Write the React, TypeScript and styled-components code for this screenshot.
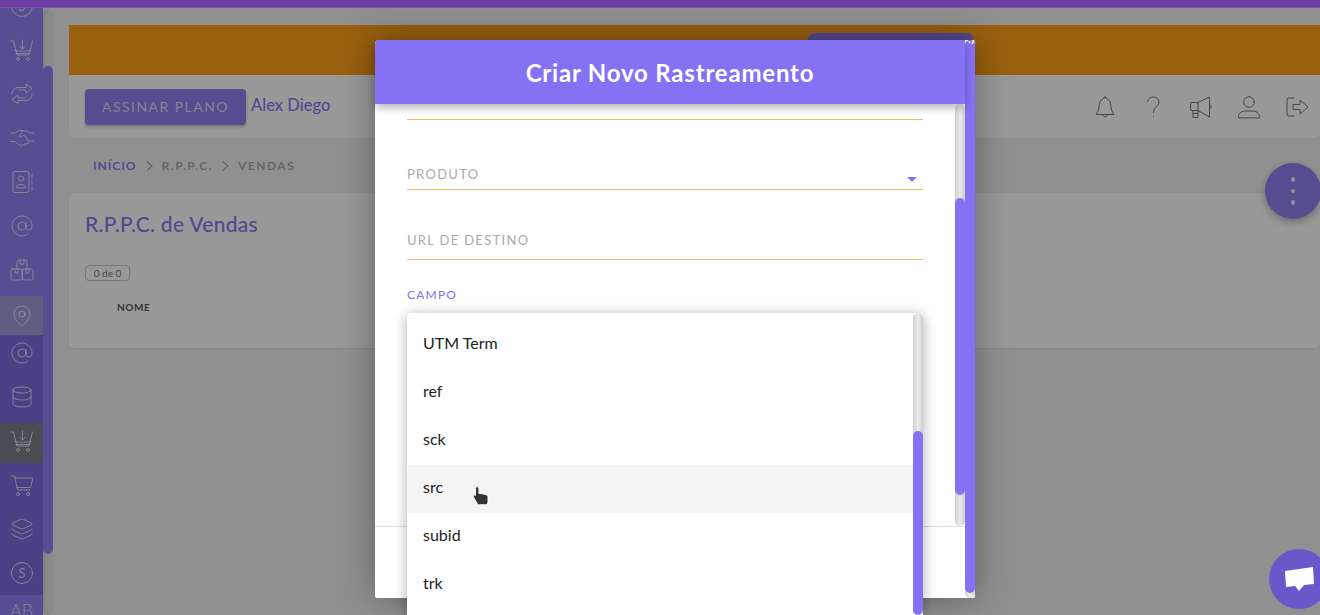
import React from "react";
import styled, { createGlobalStyle } from "styled-components";
import { AtSign, Database, Layers, MapPin } from "lucide-react";

const Font = `"Lato", "Noto Sans", sans-serif`;

const Global = createGlobalStyle`
  html, body { margin: 0; padding: 0; overflow: hidden; background: #f1f1f1; }
  #root { height: 615px; }
  * { box-sizing: border-box; }
`;

const Page = styled.div`
  position: relative; width: 1320px; height: 615px; overflow: hidden;
  display: flex; flex-direction: column; font-family: ${Font}; background: #f1f1f1;
`;
const TopBar = styled.div`
  position: relative; z-index: 3; height: 8px; flex: none; background: #6e40a5;
  border-bottom: 1px solid #7a4fae;
`;
const Shell = styled.div`display: flex; flex: 1; min-height: 0;`;
const Sidebar = styled.nav`
  width: 43px; flex: none; overflow: hidden; display: flex; flex-direction: column;
`;
const NavGroup = styled.div<{ $tone: "light" | "dark"; $offset?: number }>`
  display: flex; flex-direction: column; gap: 4px; flex: none;
  margin-top: ${(p) => p.$offset ?? 0}px;
  padding-bottom: ${(p) => (p.$tone === "light" ? 4 : 0)}px;
  background: ${(p) => (p.$tone === "light" ? "#9181f3" : "#7e6ade")};
`;
const NavRow = styled.div<{ $state?: "active" | "current" }>`
  height: 40px; display: flex; justify-content: center; align-items: flex-start;
  padding-top: 6px; color: rgba(255, 255, 255, 0.72); flex: none;
  background: ${(p) => (p.$state === "active" ? "#a09bdf" : p.$state === "current" ? "#7a808a" : "transparent")};
`;
const PinRow = styled(NavRow)`height: 39px; padding-top: 8px; background: #9f9bd8;`;
const AbRow = styled.div`
  height: 40px; flex: none; background: #9181f3; color: rgba(255,255,255,.72);
  font-size: 18px; font-weight: 300; text-align: center; padding-top: 4px; line-height: 22px;
`;
const RailTrack = styled.div`
  width: 10px; flex: none; margin-top: 1px; border-radius: 5px; background: #e6e6e6;
  box-shadow: inset 2px 0 3px rgba(0,0,0,.08);
`;
const RailThumb = styled.div`
  width: 10px; height: 488px; margin-top: 57px; border-radius: 5px; background: #9181f3;
`;
const Main = styled.main`
  flex: 1; min-width: 0; padding: 17px 0 0 16px; display: flex; flex-direction: column;
`;
const Banner = styled.div`
  height: 50px; flex: none; background: #ffa019; display: flex; justify-content: flex-end;
  padding: 8px 347px 0 0;
`;
const BannerButton = styled.div`
  width: 165px; height: 36px; border-radius: 6px; background: #8a7cf0;
`;
const HeaderCard = styled.header`
  height: 63px; flex: none; background: #fff; border-radius: 0 0 5px 5px;
  display: flex; align-items: center; padding: 0 11px 0 16px;
  box-shadow: 0 1px 3px rgba(0,0,0,.05);
`;
const PlanButton = styled.button`
  width: 161px; height: 36px; margin-top: 1px; padding: 0 0 2px; border: 0; border-radius: 4px; background: #8f7fee;
  color: rgba(255,255,255,.72); font-family: ${Font}; font-size: 14px; letter-spacing: 1.45px;
  box-shadow: 0 2px 3px rgba(0,0,0,.25);
`;
const UserName = styled.span`
  margin: 0 auto 3px 5px; color: #8b79ee; font-size: 16.5px; font-weight: 500;
`;
const HeaderIcons = styled.div`display: flex; gap: 24px; color: #777; margin-top: 1px;`;
const Crumbs = styled.div`
  height: 55px; flex: none; padding: 0 0 0 24px; display: flex; align-items: center; gap: 9px;
  font-size: 12px; font-weight: 700; letter-spacing: 1.5px; color: #aaa;
`;
const CrumbHome = styled.span`color: #8b79ee; letter-spacing: 1px;`;
const CrumbIcon = styled.svg`width: 7px; height: 10px; fill: none; stroke: #aaa; stroke-width: 1.2;`;
const ContentCard = styled.section`
  height: 155px; flex: none; background: #fff; border-radius: 5px; padding: 18px 16px 0;
  box-shadow: 0 1px 3px rgba(0,0,0,.05);
`;
const CardTitle = styled.h1`
  margin: 0; color: #8b79ee; font-size: 21px; line-height: 26px; font-weight: 500; letter-spacing: .3px;
`;
const CountBadge = styled.span`
  display: block; width: 45px; height: 16px; margin-top: 28px; border: 1px solid #c6c6c6; border-radius: 4px;
  color: #777; font-size: 10px; line-height: 14px; text-align: center;
`;
const ColumnHead = styled.div`
  margin: 19px 0 0 32px; color: #555; font-size: 10px; line-height: 14px; font-weight: 700; letter-spacing: .6px;
`;
const Overlay = styled.div`
  position: absolute; inset: 0; z-index: 2; background: rgba(0,0,0,.4); padding: 40px 0 0 375px;
`;
const Modal = styled.div`
  position: relative; width: 600px; height: 558px; display: flex; background: #fff;
  border-radius: 4px 4px 2px 2px; box-shadow: 0 0 36px rgba(0,0,0,.35);
`;
const ModalColumn = styled.div`width: 590px; display: flex; flex-direction: column;`;
const ModalHeader = styled.div`
  position: relative; z-index: 1; height: 64px; flex: none; background: #8571f3; color: #fff;
  border-radius: 4px 0 0 0; display: flex; align-items: center; justify-content: center;
  font-size: 24px; font-weight: 700; letter-spacing: .8px; box-shadow: 0 4px 8px rgba(0,0,0,.28);
`;
const ModalBody = styled.div`height: 422px; flex: none; display: flex;`;
const Form = styled.div`flex: 1; min-width: 0; overflow: hidden; padding: 0 32px;`;
const Field = styled.div<{ $pb: number; $lift?: number }>`
  height: 70px; margin-top: ${(p) => p.$lift ?? 0}px; border-bottom: 1px solid #f5bb5e;
  display: flex; align-items: flex-end; justify-content: space-between;
  padding: 0 6px ${(p) => p.$pb}px 0;
`;
const FieldLabel = styled.span<{ $focus?: boolean }>`
  font-size: 13px; line-height: 16px; letter-spacing: 1.3px; color: ${(p) => (p.$focus ? "#8571f3" : "#aaa")};
`;
const CampoLabel = styled(FieldLabel)`display: block; margin-top: 27px; font-size: 12px; letter-spacing: 1.2px;`;
const Caret = styled.i`
  width: 0; height: 0; margin-bottom: 0; border: 5px solid transparent; border-bottom: 0; border-top-color: #8571f3;
`;
const Track = styled.div<{ $thumbTop: number; $thumbHeight: number }>`
  width: 10px; flex: none; border-radius: 5px;
  background: linear-gradient(90deg, #cfcfcf, #ececec 50%, #cfcfcf);
  padding-top: ${(p) => p.$thumbTop}px;
  &::before {
    content: ""; display: block; width: 10px; height: ${(p) => p.$thumbHeight}px;
    border-radius: 5px; background: #8571f3;
  }
`;
const ModalFooter = styled.div`flex: 1; border-top: 1px solid #ddd;`;
const CloseMark = styled.svg`
  position: absolute; top: 0; right: 0; width: 13px; height: 5px;
`;
const Menu = styled.div`
  position: absolute; left: 32px; top: 273px; width: 516px; height: 302px; z-index: 2;
  background: #fff; border-radius: 4px 4px 0 0; display: flex; overflow: hidden;
  box-shadow: 0 2px 14px rgba(0,0,0,.32);
`;
const MenuList = styled.ul`flex: 1; margin: 0; padding: 8px 0 0; list-style: none;`;
const MenuItem = styled.li<{ $hover?: boolean }>`
  position: relative; height: 48px; padding: 0 16px 6px; display: flex; align-items: center;
  font-size: 16px; color: #222; background: ${(p) => (p.$hover ? "#f5f5f5" : "transparent")};
`;
const HandCursor = styled.svg`position: absolute; left: 65px; top: 21px; width: 18px; height: 20px;`;
const Fab = styled.div`
  position: absolute; left: 1265px; top: 163px; width: 56px; height: 56px; border-radius: 50%;
  background: #8f7ff0; display: flex; flex-direction: column; align-items: center; justify-content: center; gap: 7px;
  box-shadow: 0 3px 8px rgba(0,0,0,.3);
`;
const FabDot = styled.span`width: 4.5px; height: 4.5px; border-radius: 50%; background: rgba(255,255,255,.85);`;
const Chat = styled.div`
  position: absolute; z-index: 4; left: 1269px; top: 549px; width: 60px; height: 60px; border-radius: 50%;
  background: #6a57c9; display: flex; align-items: center; justify-content: center;
`;
const ChatGlyph = styled.svg`width: 30px; height: 26px; fill: #fff;`;
const IconSvg = styled.svg<{ $w?: number; $h?: number }>`
  width: ${(p) => p.$w ?? 24}px; height: ${(p) => p.$h ?? 24}px; fill: none; stroke: currentColor;
  stroke-width: 1; stroke-linecap: round; stroke-linejoin: round; flex: none;
`;
const DollarText = styled.text`
  font-family: ${Font}; font-size: 13px; fill: currentColor; stroke: none; text-anchor: middle;
`;

const CartDown = () => (
  <IconSvg viewBox="0 0 24 24">
    <path d="M1 3h2.500L7 17h12l3.500-14" />
    <path d="M4.700 12.500c5 1 10 1 16 0M6 15.500h14" />
    <path d="M12.500 2v9M9.500 8l3 3 3-3" />
    <circle cx="8" cy="21" r="1.500" /><circle cx="18" cy="21" r="1.500" />
  </IconSvg>
);
const Cart = () => (
  <IconSvg viewBox="0 0 24 24">
    <path d="M1 3h3.500L7.500 17H20" /><path d="M4.600 5H23l-2.500 9.500H7" />
    <circle cx="8" cy="21" r="1.500" /><circle cx="18" cy="21" r="1.500" />
  </IconSvg>
);
const Swap = () => (
  <IconSvg viewBox="0 0 24 24">
    <path d="M2 12c0-4 3-6.500 6-6.500h8V2l6 4.500L16 11V8H9" />
    <path d="M22 12c0 4-3 6.500-6 6.500H8V22l-6-4.500L8 13v3h7" />
  </IconSvg>
);
const Shake = () => (
  <IconSvg viewBox="0 0 24 24">
    <path d="M0.500 7h4l5-2.500h3.500L9.500 9.500c-.5 1 .5 2 1.500 1.500l3-2 5 6.500c.5 1-.5 2-1.500 1.500" />
    <path d="M23.500 7h-4l-3-2H13M0.500 15.500h4l5.500 4c1 .5 2 0 2-1l1.500.5c1 .3 1.800-.6 1.500-1.500l1.500.3c1 .2 1.500-.5 1.500-1.300M19.500 15h4" />
  </IconSvg>
);
const ContactBook = () => (
  <IconSvg viewBox="0 0 24 24">
    <rect x="3" y="1.500" width="16" height="21" rx="2" />
    <circle cx="11" cy="8.500" r="2.600" />
    <path d="M6.500 17.500v-1c0-2.500 9-2.500 9 0v1zM22 4v4M22 10.500v4M22 17v3" />
  </IconSvg>
);
const Boxes = () => (
  <IconSvg viewBox="0 0 24 24">
    <path d="M7 11V3.500A1.500 1.500 0 0 1 8.500 2h7A1.500 1.500 0 0 1 17 3.500V11M10 2v4h4V2" />
    <rect x="1" y="11" width="11" height="11" rx="1.500" /><rect x="12.500" y="11" width="10.500" height="11" rx="1.500" />
    <path d="M5 11v4h3v-4M16 11v4h3v-4" />
  </IconSvg>
);
const DollarCoin = () => (
  <IconSvg viewBox="0 0 24 24">
    <circle cx="12" cy="12" r="10.500" />
    <DollarText x="12" y="16.500">S</DollarText>
  </IconSvg>
);
const Bell = () => (
  <IconSvg viewBox="0 0 24 24">
    <path d="M12 2a1.600 1.600 0 0 1 1.600 1.600C17 5 18 8 18 12c0 3 1.500 5 3 7.500H3C4.500 17 6 15 6 12c0-4 1-7 4.400-8.400A1.600 1.600 0 0 1 12 2z" />
    <path d="M9.500 20c.5 2.500 4.500 2.500 5 0" />
  </IconSvg>
);
const Question = () => (
  <IconSvg viewBox="0 0 24 24">
    <path d="M6.500 6.500C7 3.500 9.500 2 12.500 2S18 4 18 7c0 4.500-5.500 5-5.500 10.500M12.500 21.500v.2" />
  </IconSvg>
);
const Megaphone = () => (
  <IconSvg viewBox="0 0 24 24">
    <path d="M2 7.500h7v8H2zM9 7.500l11.500-5.500v20L9 15.500M20.500 9.500c2.500.5 2.500 3.500 0 4M4 15.500V22.500h5v-7M4 18.500h5" />
  </IconSvg>
);
const Person = () => (
  <IconSvg viewBox="0 0 24 24">
    <circle cx="12" cy="7" r="5.300" />
    <path d="M1.500 22.500c0-1.500.2-3 1.500-4.300 1-1 2.500-2 4.500-2.200h9c2 .2 3.500 1.200 4.500 2.200 1.300 1.300 1.500 2.800 1.500 4.300z" />
  </IconSvg>
);
const Exit = () => (
  <IconSvg viewBox="0 0 24 24">
    <path d="M9 3H4a2 2 0 0 0-2 2v14a2 2 0 0 0 2 2h5M8.500 9.500h6.500V5l8 7-8 7v-4.500H8.500z" />
  </IconSvg>
);
const Chevron = () => (
  <CrumbIcon viewBox="0 0 7 10"><path d="M1 .5 6 5 1 9.500" /></CrumbIcon>
);

const upperNav = [DollarCoin, CartDown, Swap, Shake, ContactBook, null, Boxes];
const menuItems = ["UTM Term", "ref", "sck", "src", "subid", "trk"];

export default function App() {
  return (
    <Page>
      <Global />
      <TopBar />
      <Shell>
        <Sidebar>
          <NavGroup $tone="light" $offset={-20}>
            {upperNav.map((Icon, i) => (
              <NavRow key={i}>{Icon ? <Icon /> : <AtSign size={24} strokeWidth={1} />}</NavRow>
            ))}
          </NavGroup>
          <PinRow $state="active"><MapPin size={24} strokeWidth={1} /></PinRow>
          <NavGroup $tone="dark">
            <NavRow><AtSign size={24} strokeWidth={1} /></NavRow>
            <NavRow><Database size={24} strokeWidth={1} /></NavRow>
            <NavRow $state="current"><CartDown /></NavRow>
            <NavRow><Cart /></NavRow>
            <NavRow><Layers size={24} strokeWidth={1} /></NavRow>
            <NavRow><DollarCoin /></NavRow>
          </NavGroup>
          <AbRow>AB</AbRow>
        </Sidebar>
        <RailTrack><RailThumb /></RailTrack>
        <Main>
          <Banner><BannerButton /></Banner>
          <HeaderCard>
            <PlanButton>ASSINAR PLANO</PlanButton>
            <UserName>Alex Diego</UserName>
            <HeaderIcons><Bell /><Question /><Megaphone /><Person /><Exit /></HeaderIcons>
          </HeaderCard>
          <Crumbs>
            <CrumbHome>INÍCIO</CrumbHome><Chevron /><span>R.P.P.C.</span><Chevron /><span>VENDAS</span>
          </Crumbs>
          <ContentCard>
            <CardTitle>R.P.P.C. de Vendas</CardTitle>
            <CountBadge>0 de 0</CountBadge>
            <ColumnHead>NOME</ColumnHead>
          </ContentCard>
        </Main>
      </Shell>
      <Fab><FabDot /><FabDot /><FabDot /></Fab>
      <Overlay>
        <Modal>
          <ModalColumn>
            <ModalHeader>Criar Novo Rastreamento</ModalHeader>
            <ModalBody>
              <Form>
                <Field $pb={14} $lift={-54}><FieldLabel>IDENTIFICAÇÃO</FieldLabel></Field>
                <Field $pb={7}><FieldLabel>PRODUTO</FieldLabel><Caret /></Field>
                <Field $pb={11}><FieldLabel>URL DE DESTINO</FieldLabel></Field>
                <CampoLabel $focus>CAMPO</CampoLabel>
              </Form>
              <Track $thumbTop={94} $thumbHeight={297} />
            </ModalBody>
            <ModalFooter />
          </ModalColumn>
          <Track $thumbTop={0} $thumbHeight={553} />
          <CloseMark viewBox="0 0 13 5">
            <path d="M1 4 3 1M6 0l2 3M10 4l2-4" stroke="#fff" strokeWidth="1.4" fill="none" />
            <circle cx="7" cy="0.6" r="0.8" fill="#a33" />
          </CloseMark>
          <Menu>
            <MenuList>
              {menuItems.map((item) => (
                <MenuItem key={item} $hover={item === "src"}>
                  {item}
                  {item === "src" && (
                    <HandCursor viewBox="0 0 17 20">
                      <path
                        d="M3 2.300a1.700 1.700 0 0 1 3.400 0V7.500l2.600.2 2.400.4 2.400.7c1.100.4 1.700 1.100 1.700 2.200v5c0 1.500-1 2.800-2.400 2.800H6.800c-1.100 0-1.800-.6-2.300-1.600L.9 11c-.7-1.300.8-2.700 2.100-1.500z"
                        fill="#333" stroke="#fff" strokeWidth="1"
                      />
                    </HandCursor>
                  )}
                </MenuItem>
              ))}
            </MenuList>
            <Track $thumbTop={118} $thumbHeight={184} />
          </Menu>
        </Modal>
      </Overlay>
      <Chat>
        <ChatGlyph viewBox="0 0 30 26">
          <path d="M1 5 29 1l1 17-10 1-5 6-4-5-9 1z" />
        </ChatGlyph>
      </Chat>
    </Page>
  );
}
